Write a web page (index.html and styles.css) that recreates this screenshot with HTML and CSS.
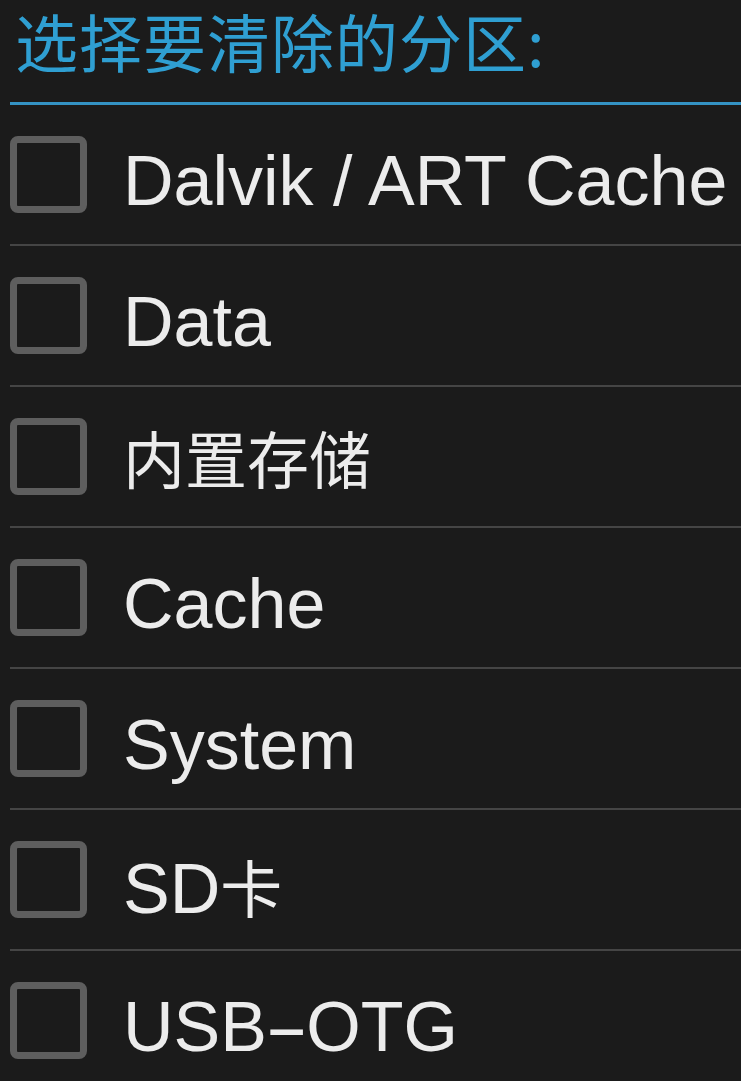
FILE: index.html
```html
<!DOCTYPE html>
<html lang="zh">
<head>
<meta charset="utf-8">
<link rel="stylesheet" href="styles.css">
</head>
<body>
<div class="screen">
  <div class="title">选择要清除的分区:</div>
  <div class="title-rule"></div>
  <ul class="list">
    <li class="row"><span class="box"></span><span class="label">Dalvik / ART Cache</span></li>
    <li class="row"><span class="box"></span><span class="label">Data</span></li>
    <li class="row"><span class="box"></span><span class="label cjk">内置存储</span></li>
    <li class="row"><span class="box"></span><span class="label">Cache</span></li>
    <li class="row"><span class="box"></span><span class="label">System</span></li>
    <li class="row"><span class="box"></span><span class="label">SD<span class="cjk">卡</span></span></li>
    <li class="row"><span class="box"></span><span class="label">USB<span class="dash">-</span>OTG</span></li>
  </ul>
</div>
</body>
</html>
```
FILE: styles.css
```css
html, body {
  margin: 0;
  padding: 0;
  background: #1b1b1b;
}
.screen {
  width: 741px;
  height: 1081px;
  overflow: hidden;
  background: #1b1b1b;
  font-family: "Liberation Sans", "Noto Sans CJK SC", sans-serif;
}
.title {
  height: 102px;
  padding-left: 15px;
  padding-top: 2px;
  box-sizing: border-box;
  font-family: "Noto Sans CJK SC", sans-serif;
  font-size: 63px;
  letter-spacing: 1px;
  line-height: 76px;
  color: #2f9fd2;
  white-space: nowrap;
}
.title-rule {
  margin-left: 10px;
  height: 3px;
  background: #3493c4;
}
.list {
  list-style: none;
  margin: 0 0 0 10px;
  padding: 0;
}
.row {
  display: flex;
  align-items: center;
  height: 139px;
  border-bottom: 2px solid #454545;
}
.box {
  width: 63px;
  height: 63px;
  border: 7px solid #5e5e5e;
  border-radius: 8px;
  flex: none;
}
.label {
  margin-left: 36px;
  margin-top: 12px;
  font-size: 70px;
  color: #ececec;
  white-space: nowrap;
}
.cjk {
  font-family: "Noto Sans CJK SC", sans-serif;
  font-size: 62px;
}
.label.cjk {
  margin-top: 0;
}
.dash {
  display: inline-block;
  margin: 0 8px;
  transform: scaleX(1.9);
}
```
